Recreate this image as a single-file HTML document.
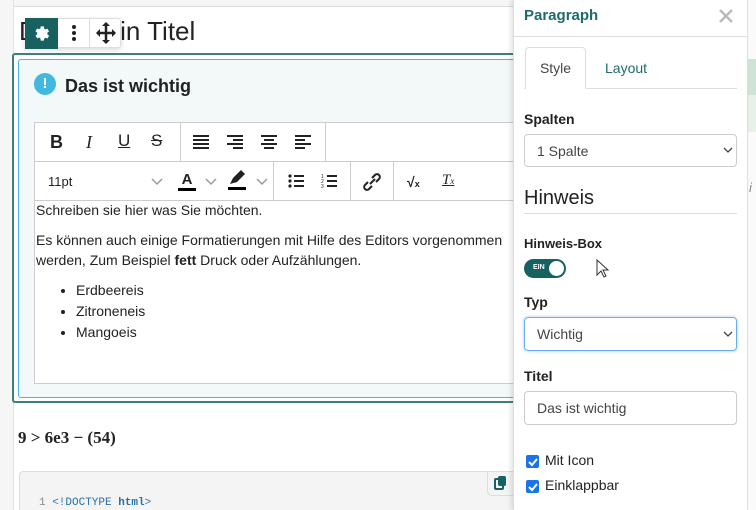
<!DOCTYPE html>
<html style="width:756px;height:510px;overflow:hidden"><head><style>
*{box-sizing:border-box;margin:0;padding:0}
body{width:756px;height:510px;overflow:hidden;position:relative;background:#fff;font-family:"Liberation Sans",sans-serif;color:#222}
.a{position:absolute}
.tb svg{position:absolute}
</style></head><body>
<div class="a" style="left:0;top:0;width:13px;height:510px;background:#f6f6f6"></div>
<div class="a" style="left:13px;top:0;width:1px;height:510px;background:#e2e2e2"></div>
<div class="a" style="left:14px;top:0;width:500px;height:7px;background:#f6f6f6;border-bottom:1px solid #ddd"></div>
<div class="a" style="left:19px;top:16px;font-size:26px;color:#222;white-space:nowrap">Das ist ein Titel</div>
<div class="a" style="left:25px;top:18px;width:96px;height:30px;background:#fff;border:1px solid #ddd;border-radius:3px;box-shadow:0 2px 6px rgba(0,0,0,.15)"></div>
<div class="a" style="left:25px;top:18px;width:33px;height:31px;background:#176161"></div>
<svg class="a" style="left:32px;top:24px" width="19" height="19" viewBox="0 0 24 24"><path fill="#fff" d="M12 8.5a3.5 3.5 0 1 0 0 7 3.5 3.5 0 0 0 0-7zM19.4 13a7.5 7.5 0 0 0 0-2l2.1-1.6-2-3.5-2.5 1a7 7 0 0 0-1.700-1L15 3h-4l-.4 2.7a7 7 0 0 0-1.7 1l-2.5-1-2 3.5L6.6 11a7.5 7.5 0 0 0 0 2l-2.1 1.6 2 3.5 2.5-1a7 7 0 0 0 1.7 1L11 21h4l.4-2.7a7 7 0 0 0 1.7-1l2.5 1 2-3.5z"/></svg>
<div class="a" style="left:89px;top:19px;width:1px;height:29px;background:#ddd"></div>
<svg class="a" style="left:70px;top:24px" width="8" height="18"><circle cx="4" cy="3" r="2" fill="#222"/><circle cx="4" cy="9" r="2" fill="#222"/><circle cx="4" cy="15" r="2" fill="#222"/></svg>
<svg class="a" style="left:95px;top:21px" width="22" height="24" viewBox="0 0 22 24"><path d="M11 2v20M2 12h18" stroke="#222" stroke-width="2.5"/><path d="M11 1l-4 4h8zM11 23l-4-4h8zM1 12l4-4v8zM21 12l-4-4v8z" fill="#222"/></svg>
<div class="a" style="left:12px;top:53px;width:510px;height:350px;border:2px solid #3f7f7f;border-right:none;border-radius:3px 0 0 3px"></div>
<div class="a" style="left:18px;top:59px;width:500px;height:339px;border:1px solid #41b8dd;border-right:none;border-radius:3px 0 0 3px;background:#f3f8f9"></div>
<div class="a" style="left:34px;top:73px;width:22px;height:22px;border-radius:50%;background:#41b8dd;color:#fff;font-weight:bold;font-size:15px;text-align:center;line-height:22px">!</div>
<div class="a" style="left:65px;top:76px;font-size:18px;font-weight:bold;color:#222">Das ist wichtig</div>
<div class="a tb" style="left:34px;top:122px;width:480px;height:262px;background:#fff;border:1px solid #ccc;border-right:none">
 <div class="a" style="left:0;top:38px;width:480px;height:1px;background:#ccc"></div>
 <div class="a" style="left:0;top:77px;width:480px;height:1px;background:#ccc"></div>
 <div class="a" style="left:145px;top:0;width:1px;height:38px;background:#ccc"></div>
 <div class="a" style="left:290px;top:0;width:1px;height:38px;background:#ccc"></div>
 <div class="a" style="left:238px;top:38px;width:1px;height:39px;background:#ccc"></div>
 <div class="a" style="left:315px;top:38px;width:1px;height:39px;background:#ccc"></div>
 <div class="a" style="left:358px;top:38px;width:1px;height:39px;background:#ccc"></div>
 <div class="a" style="left:15px;top:9px;font-size:18px;font-weight:bold">B</div>
 <div class="a" style="left:51px;top:9px;font-size:18px;font-style:italic;font-family:'Liberation Serif',serif">I</div>
 <div class="a" style="left:83px;top:8px;font-size:17px;text-decoration:underline">U</div>
 <div class="a" style="left:116px;top:8px;font-size:17px;text-decoration:line-through">S</div>
 <svg style="left:158px;top:12px" width="18" height="14"><path d="M0 1h16M0 5h16M0 9h16M0 13h16" stroke="#222" stroke-width="2"/></svg>
 <svg style="left:192px;top:12px" width="18" height="14"><path d="M0 1h16M6 5h10M0 9h16M6 13h10" stroke="#222" stroke-width="2"/></svg>
 <svg style="left:226px;top:12px" width="18" height="14"><path d="M0 1h16M3 5h10M0 9h16M3 13h10" stroke="#222" stroke-width="2"/></svg>
 <svg style="left:260px;top:12px" width="18" height="14"><path d="M0 1h16M0 5h10M0 9h16M0 13h10" stroke="#222" stroke-width="2"/></svg>
 <div class="a" style="left:13px;top:51px;font-size:13px">11pt</div>
 <svg style="left:116px;top:55px" width="12" height="8"><path d="M1 1l5 5 5-5" stroke="#999" fill="none" stroke-width="1.5"/></svg>
 <div class="a" style="left:143px;top:48px;font-size:15px;font-weight:bold;border-bottom:3px solid #000;width:18px;text-align:center;line-height:17px">A</div>
 <svg style="left:170px;top:55px" width="12" height="8"><path d="M1 1l5 5 5-5" stroke="#999" fill="none" stroke-width="1.5"/></svg>
 <svg style="left:193px;top:47px" width="20" height="16"><path d="M2 14l3-6 8-8 4 4-8 8z" fill="#222"/></svg>
 <div class="a" style="left:193px;top:64px;width:18px;height:3px;background:#000"></div>
 <svg style="left:221px;top:55px" width="12" height="8"><path d="M1 1l5 5 5-5" stroke="#999" fill="none" stroke-width="1.5"/></svg>
 <svg style="left:253px;top:51px" width="16" height="14"><g fill="#222"><circle cx="2" cy="2" r="1.6"/><circle cx="2" cy="7" r="1.6"/><circle cx="2" cy="12" r="1.6"/></g><path d="M6 2h10M6 7h10M6 12h10" stroke="#222" stroke-width="2"/></svg>
 <svg style="left:286px;top:50px" width="16" height="16"><text x="0" y="5" font-size="5" fill="#222">1</text><text x="0" y="10" font-size="5" fill="#222">2</text><text x="0" y="15" font-size="5" fill="#222">3</text><path d="M6 3h10M6 8h10M6 13h10" stroke="#222" stroke-width="2"/></svg>
 <svg style="left:327px;top:49px" width="20" height="20"><path d="M8 12l5-5M6 10l-3 3a2.5 2.5 0 0 0 4 4l3-3M14 10l3-3a2.5 2.5 0 0 0-4-4l-3 3" stroke="#222" stroke-width="2" fill="none"/></svg>
 <div class="a" style="left:372px;top:51px;font-size:14px;font-weight:bold">√<span style="font-size:9px">x</span></div>
 <div class="a" style="left:407px;top:49px;font-size:15px;font-style:italic;text-decoration:underline;font-family:'Liberation Serif',serif">T<span style="font-size:9px">x</span></div>
 <div class="a" style="left:1px;top:77px;font-size:14px;line-height:20px;width:470px">Schreiben sie hier was Sie möchten.
 <p style="margin-top:10px">Es können auch einige Formatierungen mit Hilfe des Editors vorgenommen werden, Zum Beispiel <b>fett</b> Druck oder Aufzählungen.</p>
 <ul style="margin:10px 0 0 40px;line-height:21px"><li>Erdbeereis</li><li>Zitroneneis</li><li>Mangoeis</li></ul></div>
</div>
<div class="a" style="left:18px;top:428px;font-size:17px;font-family:'Liberation Serif',serif;font-weight:bold">9 &gt; 6e3 − (54)</div>
<div class="a" style="left:19px;top:471px;width:500px;height:39px;background:#f4f4f4;border:1px solid #ddd;border-bottom:none;border-radius:4px 4px 0 0"></div>
<div class="a" style="left:487px;top:471px;width:30px;height:25px;border:1px solid #ddd;border-radius:0 0 0 5px;background:#f4f4f4"></div>
<svg class="a" style="left:494px;top:475px" width="14" height="16"><rect x="1" y="4" width="8" height="10" rx="1" fill="none" stroke="#176161" stroke-width="2"/><rect x="4" y="1" width="8" height="10" rx="2" fill="#176161"/></svg>
<div class="a" style="left:39px;top:497px;font-family:'Liberation Mono',monospace;font-size:11px;color:#888">1 <span style="color:#2a6fa8">&lt;!DOCTYPE <b>html</b>&gt;</span></div>
<div class="a" style="left:747px;top:0;width:9px;height:510px;background:#fafafa;border-left:1px solid #e5e5e5"></div>
<div class="a" style="left:748px;top:59px;width:8px;height:36px;background:#cfe3d7"></div>
<div class="a" style="left:748px;top:95px;width:8px;height:37px;background:#e8f0ea"></div>
<div class="a" style="left:749px;top:180px;font-size:13px;font-style:italic;color:#888">i</div>
<div class="a" style="left:513px;top:0;width:234px;height:510px;background:#fff;border-left:1px solid #ddd;box-shadow:-2px 0 5px rgba(0,0,0,.12)">
 <div class="a" style="left:10px;top:7px;font-size:15px;font-weight:bold;color:#1f6b6b">Paragraph</div>
 <svg class="a" style="left:204px;top:8px" width="16" height="16"><path d="M2 2l12 12M14 2L2 14" stroke="#bbb" stroke-width="2.5"/></svg>
 <div class="a" style="left:0;top:36px;width:233px;height:1px;background:#ddd"></div>
 <div class="a" style="left:10px;top:88px;width:213px;height:1px;background:#ddd"></div>
 <div class="a" style="left:11px;top:47px;width:61px;height:42px;border:1px solid #ddd;border-bottom:1px solid #fff;border-radius:4px 4px 0 0;background:#fff;font-size:14px;color:#444;text-align:center;line-height:40px">Style</div>
 <div class="a" style="left:91px;top:60px;font-size:14px;color:#1f6b6b">Layout</div>
 <div class="a" style="left:10px;top:111px;font-size:14px;font-weight:bold">Spalten</div>
 <div class="a" style="left:10px;top:134px;width:213px;height:33px;border:1px solid #ccc;border-radius:4px;font-size:14px;color:#444;padding:8px 12px">1 Spalte</div>
 <svg class="a" style="left:209px;top:147px" width="10" height="7"><path d="M1 1l4 4 4-4" stroke="#444" fill="none" stroke-width="1.3"/></svg>
 <div class="a" style="left:10px;top:187px;font-size:20px;color:#222">Hinweis</div>
 <div class="a" style="left:10px;top:213px;width:213px;height:1px;background:#ddd"></div>
 <div class="a" style="left:10px;top:236px;font-size:13px;font-weight:bold">Hinweis-Box</div>
 <div class="a" style="left:10px;top:259px;width:42px;height:19px;border-radius:10px;background:#176161"></div>
 <div class="a" style="left:19px;top:264px;font-size:7px;color:#fff;font-weight:bold">EIN</div>
 <div class="a" style="left:35px;top:261px;width:15px;height:15px;border-radius:50%;background:#fff"></div>
 <svg class="a" style="left:82px;top:259px" width="14" height="20"><path d="M1 1v15l4-4 3 6 2-1-3-6h5z" fill="#fff" stroke="#333"/></svg>
 <div class="a" style="left:10px;top:294px;font-size:14px;font-weight:bold">Typ</div>
 <div class="a" style="left:10px;top:317px;width:213px;height:34px;border:1px solid #6aaef0;border-radius:4px;box-shadow:0 0 3px rgba(80,150,240,.5);font-size:14px;color:#444;padding:8px 12px">Wichtig</div>
 <svg class="a" style="left:209px;top:331px" width="10" height="7"><path d="M1 1l4 4 4-4" stroke="#444" fill="none" stroke-width="1.3"/></svg>
 <div class="a" style="left:10px;top:368px;font-size:14px;font-weight:bold">Titel</div>
 <div class="a" style="left:10px;top:391px;width:213px;height:34px;border:1px solid #ccc;border-radius:4px;font-size:14px;color:#444;padding:8px 12px">Das ist wichtig</div>
 <div class="a" style="left:12px;top:455px;width:13px;height:13px;background:#1a73e8;border-radius:2px"></div>
 <svg class="a" style="left:12px;top:455px" width="13" height="13"><path d="M3 7l3 3 5-6" stroke="#fff" stroke-width="2" fill="none"/></svg>
 <div class="a" style="left:31px;top:452px;font-size:14px">Mit Icon</div>
 <div class="a" style="left:12px;top:480px;width:13px;height:13px;background:#1a73e8;border-radius:2px"></div>
 <svg class="a" style="left:12px;top:480px" width="13" height="13"><path d="M3 7l3 3 5-6" stroke="#fff" stroke-width="2" fill="none"/></svg>
 <div class="a" style="left:31px;top:477px;font-size:14px">Einklappbar</div>
</div>
</body></html>
